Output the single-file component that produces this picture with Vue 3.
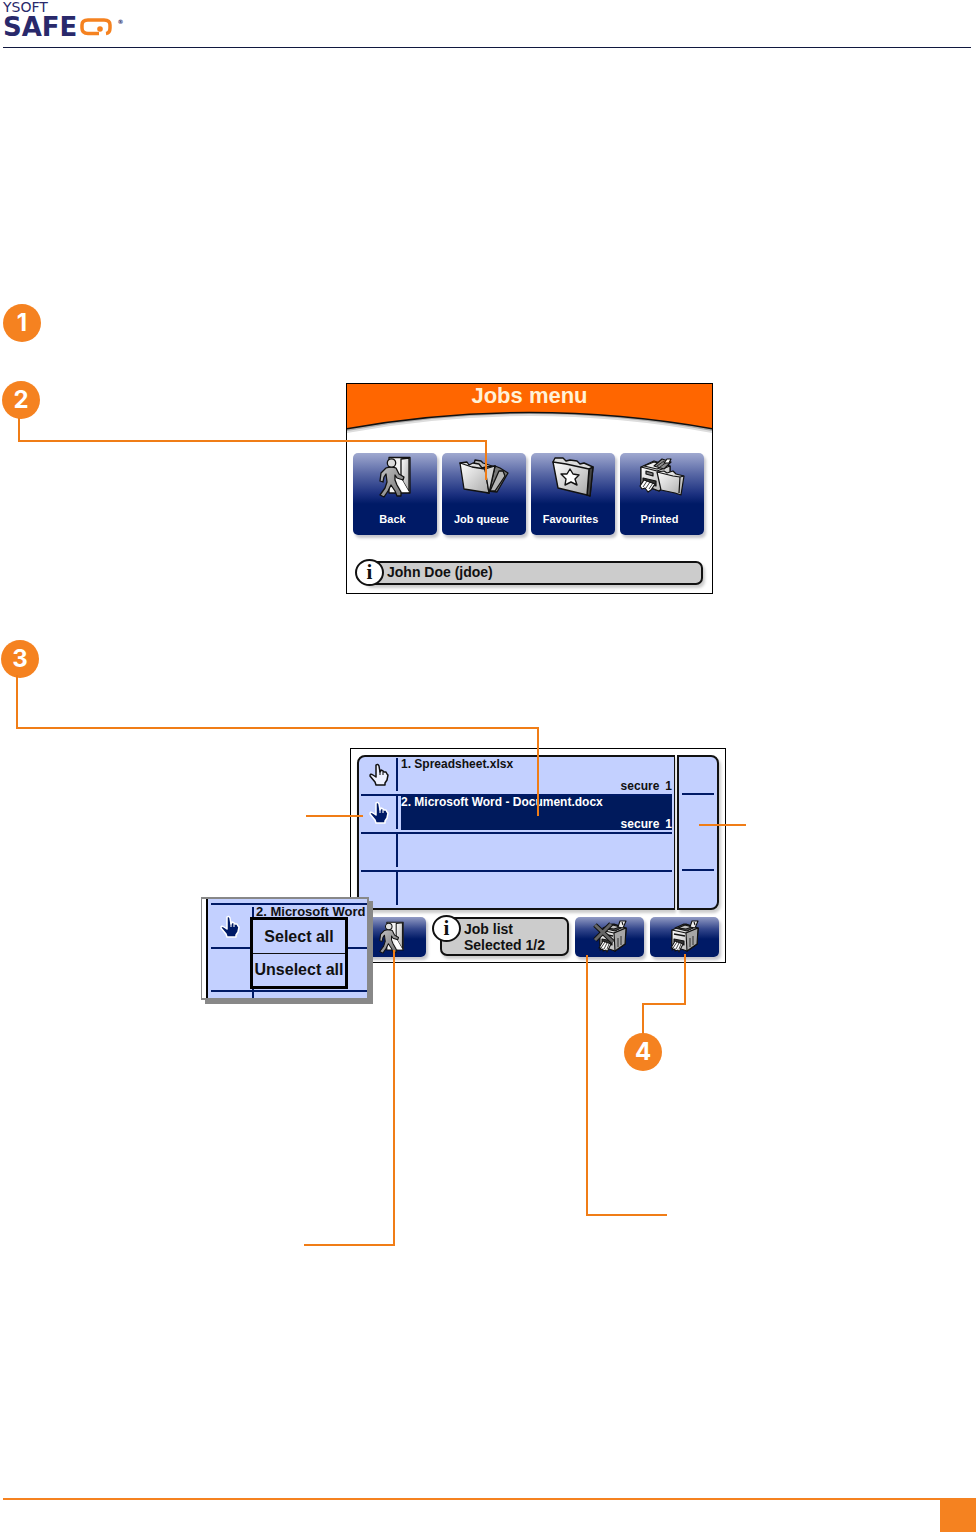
<script setup>
const menu = [
  { label: 'Back', icon: 'exit' },
  { label: 'Job queue', icon: 'folders' },
  { label: 'Favourites', icon: 'star' },
  { label: 'Printed', icon: 'printed' }
]
const jobs = [
  { name: '1. Spreadsheet.xlsx', mode: 'secure', copies: '1', selected: false },
  { name: '2. Microsoft Word - Document.docx', mode: 'secure', copies: '1', selected: true },
  null,
  null
]
const connectors = [
  '19,418 19,441 486,441 486,480',
  '17,675 17,728 538,728 538,816',
  '306,816 363,816',
  '699,825 746,825',
  '394,950 394,1245 304,1245',
  '587,955 587,1215 667,1215',
  '685,954 685,1004 643,1004 643,1035'
]
</script>

<template>
  <div class="page">
    <svg class="defs" aria-hidden="true">
      <defs>
        <linearGradient id="paper" x1="0" y1="0" x2="1" y2="1">
          <stop offset="0" stop-color="#fff" />
          <stop offset="1" stop-color="#a9a9a9" />
        </linearGradient>
        <linearGradient id="grey" x1="0" y1="0" x2="1" y2="1">
          <stop offset="0" stop-color="#c4c4c4" />
          <stop offset="1" stop-color="#6f6f6f" />
        </linearGradient>
        <symbol id="exit" viewBox="0 0 32 42">
          <g stroke="#111" stroke-width="1.3" stroke-linejoin="round">
            <path d="M10 1.5H31V37H10z" fill="#f4f4f4" />
            <path d="M22 3 30 2V36L22 22z" fill="url(#paper)" />
            <path d="M22 22 30 36H24L20 29z" fill="#fff" stroke="none" />
            <path d="M7 12Q12 10 17 12L20 18 25 21 24 24 18 22 16 19V24L18 29 22 36 22 40 18 40 16 35 12 29 9 35 5 41 1 39 6 32 8 26 7 18 5 21 4 26 1 25 2 17z" fill="url(#grey)" />
            <circle cx="12.5" cy="7" r="4.2" fill="#ddd" />
          </g>
        </symbol>
        <symbol id="folders" viewBox="0 0 50 36">
          <g stroke="#111" stroke-width="1.3" stroke-linejoin="round">
            <path d="M15 5 16 1 22 2 24 4 36 8 35 31 28 25z" fill="#bbb" />
            <path d="M29 32 36 7 41 9 49 14 38 33z" fill="#777" />
            <path d="M31 32 40 12 44 12 46 17 36 32z" fill="#b5b5b5" />
            <path d="M1 4 8 3 10 6 14 4 20 5 23 9 27 8 36 7 30 34 26 33z" fill="#ddd" />
            <path d="M1 4 5 30 30 34 26 10 13 8z" fill="url(#paper)" />
            <path d="M26 10 36 7 30 34z" fill="#d2d2d2" />
          </g>
        </symbol>
        <symbol id="star" viewBox="0 0 43 41">
          <g stroke="#111" stroke-width="1.4" stroke-linejoin="round">
            <path d="M1 5 3 1 11 1 14 4 18 3 25 4 28 7 32 6 41 10 38 39 32 35z" fill="#ddd" />
            <path d="M37 12 41 10 38 39 35 38z" fill="#444" />
            <path d="M1 5 6 31 35 38 37 12 14 7z" fill="url(#paper)" />
            <path d="M18 12 21 17 27 18 23 22 25 28 19 25 13 28 14 22 9 17 15 17z" fill="#fff" />
          </g>
        </symbol>
        <symbol id="printer" viewBox="0 0 30 34">
          <g stroke="#111" stroke-width="1.1" stroke-linejoin="round">
            <path d="M2 10 16 4 28 8 27 24 17 31 2 24z" fill="#ddd" />
            <path d="M2 10 16 13 28 8 27 24 17 31 2 26z" fill="url(#paper)" />
            <path d="M16 13 28 8 27 24 17 31z" fill="#a6a6a6" />
            <path d="M5 8 14 4 25 7 17 11z" fill="#555" />
            <path d="M8 8 15 5 22 7 16 9z" fill="#bdbdbd" />
            <path d="M20 7 22 1 28 1 25 8z" fill="#eee" />
            <path d="M24 2 25 5" fill="none" />
            <path d="M4 14 15 16" stroke-width="1.6" />
            <path d="M4 19 14 21V25L4 22z" fill="#333" />
            <path d="M5 21 1 28 3 28 2 30 5 29 5 31 8 30 9 32 13 24z" fill="#fff" />
            <path d="M7 22 3 28M9 23 6 29M11 24 9 29" stroke-width=".8" />
            <path d="M20 18V27M23 16V25" stroke-width=".8" />
          </g>
        </symbol>
        <symbol id="printed" viewBox="0 0 47 38">
          <g stroke="#111" stroke-width="1.2" stroke-linejoin="round">
            <path d="M2 9 15 3 31 8V24L20 33 2 27z" fill="#ddd" />
            <path d="M2 9 18 13 31 8V24L20 33 2 26z" fill="url(#paper)" />
            <path d="M5 8 15 4 28 7 18 11z" fill="#eee" />
            <path d="M15 8 23 1 32 4 25 11z" fill="#8c8c8c" />
            <path d="M18 8 25 3M21 9 28 4" stroke-width=".8" />
            <path d="M25 5 28 1 32 1 30 5z" fill="#fff" />
            <path d="M7 13 14 15V18L7 16z" fill="#777" />
            <path d="M4 20 17 23V28L4 25z" fill="#333" />
            <path d="M5 22 1 28 3 31 6 30 9 34 12 32 16 26z" fill="#fff" />
            <path d="M8 23 4 29M11 24 7 30M14 25 10 31" stroke-width=".8" />
            <path d="M18 14 25 13 28 15 34 13 37 16 45 18 42 37 36 35 22 32z" fill="url(#paper)" />
            <path d="M18 14 34 18 41 19 40 35M45 18 41 19" fill="none" />
          </g>
        </symbol>
        <symbol id="hand" viewBox="0 0 20 24">
          <path d="M7 2Q9 .5 10 3L11 9 12 7 14 8 15 9 17 9 18 11 19 12 18 17 16 20V22H7L6 19 1 13Q1 10 4 12L7 14z" stroke-width="1.5" stroke-linejoin="round" />
          <path d="M11 8V12M14 9V12" fill="none" stroke-width="1.1" />
        </symbol>
      </defs>
    </svg>

    <header class="masthead">
      <p class="brand-top">YSOFT</p>
      <p class="brand">
        <span>SAFE</span>
        <svg class="brand-mark" viewBox="0 0 36 20" role="img" aria-label="Q">
          <path d="M20 16.500H9Q3 16.500 3 11V8Q3 3 9 3H25Q31 3 31 8V11Q31 16 27 16.500" fill="none" stroke="#f58220" stroke-width="3.500" />
          <circle cx="21" cy="12" r="2.800" fill="#f58220" />
        </svg>
        <sup>®</sup>
      </p>
    </header>

    <main>
      <section class="step first"><span class="badge">1</span></section>

      <section class="step second">
        <span class="badge">2</span>
        <div class="screen menu-screen">
          <div class="banner">
            <svg viewBox="0 0 365 54" preserveAspectRatio="none" aria-hidden="true">
              <path d="M0 49Q182 15 365 49V0H0z" fill="#ddd" />
              <path d="M0 47Q182 13 365 47V0H0z" fill="#aaa" />
              <path d="M-2 45Q182 12 367 45V-2H-2z" fill="#ff6600" stroke="#111" stroke-width="1.500" />
            </svg>
            <h1>Jobs menu</h1>
          </div>
          <nav class="tiles">
            <button v-for="m in menu" :key="m.label" type="button" class="tile">
              <svg :class="['icon', m.icon]" aria-hidden="true"><use :href="'#' + m.icon" /></svg>
              <span class="label">{{ m.label }}</span>
            </button>
          </nav>
          <div class="user">
            <span class="info">i</span>
            <p>John Doe (jdoe)</p>
          </div>
        </div>
      </section>

      <section class="step third">
        <span class="badge">3</span>
        <div class="screen list-screen">
          <div class="panels">
            <ul class="jobs">
              <li v-for="(job, i) in jobs" :key="i">
                <div class="pick">
                  <button v-if="job" type="button" :aria-label="'Select ' + job.name">
                    <svg :class="['hand', { on: job.selected }]" aria-hidden="true"><use href="#hand" /></svg>
                  </button>
                </div>
                <div v-if="job" :class="['job', { selected: job.selected }]">
                  <span>{{ job.name }}</span>
                  <span class="meta"><span>{{ job.mode }}</span><span>{{ job.copies }}</span></span>
                </div>
              </li>
            </ul>
            <div class="scroller">
              <button type="button" aria-label="Scroll up"></button>
              <div></div>
              <button type="button" aria-label="Scroll down"></button>
            </div>
          </div>
          <div class="toolbar">
            <button type="button" class="tool" aria-label="Back">
              <svg class="icon tool-exit" aria-hidden="true"><use href="#exit" /></svg>
            </button>
            <div class="summary">
              <span class="info">i</span>
              <p>Job list<br />Selected 1/2</p>
            </div>
            <button type="button" class="tool" aria-label="Delete selected">
              <svg class="icon delete" viewBox="0 0 36 34" aria-hidden="true">
                <use href="#printer" x="6" y="0" width="30" height="34" />
                <path d="M3 5 21 22M19 4 3 20" stroke="#111" stroke-width="5" />
                <path d="M3 5 21 22M19 4 3 20" stroke="#666" stroke-width="3" />
              </svg>
            </button>
            <button type="button" class="tool" aria-label="Print selected">
              <svg class="icon print" aria-hidden="true"><use href="#printer" /></svg>
            </button>
          </div>
        </div>
      </section>
    </main>

    <aside class="popup">
      <div class="popup-view">
        <svg class="hand on" aria-hidden="true"><use href="#hand" /></svg>
        <span class="popup-job">2. Microsoft Word</span>
        <i class="rule r1"></i><i class="rule r2"></i><i class="rule r3"></i><i class="column"></i>
        <div class="choices">
          <button type="button">Select all</button>
          <button type="button">Unselect all</button>
        </div>
      </div>
    </aside>

    <svg class="connectors" viewBox="0 0 976 1300" aria-hidden="true">
      <polyline v-for="c in connectors" :key="c" :points="c" />
    </svg>
    <span class="badge fourth">4</span>

    <footer><span></span></footer>
  </div>
</template>

<style>
body { background: #fff; }
</style>

<style scoped>
* { box-sizing: border-box; }
p, h1, ul { margin: 0; padding: 0; }
button { font: inherit; color: inherit; border: 0; padding: 0; background: none; }
.page {
  position: relative;
  min-height: 100vh;
  display: flex;
  flex-direction: column;
  overflow: hidden;
  font-family: "Liberation Sans", Arial, sans-serif;
  font-weight: bold;
}
.defs { position: absolute; width: 0; height: 0; }
.masthead {
  height: 48px;
  margin: 0 5px 0 3px;
  border-bottom: 1px solid #10183f;
  color: #29296b;
  font-family: "DejaVu Sans", sans-serif;
}
.brand-top { font-size: 14px; line-height: 14px; font-weight: normal; }
.brand { display: flex; align-items: center; gap: 2px; height: 26px; font-size: 26px; line-height: 26px; }
.brand-mark { width: 36px; height: 20px; }
.brand sup { align-self: flex-start; font-size: 6px; line-height: 16px; }
main { flex: 1; padding-top: 256px; }
.step { display: grid; justify-items: start; align-items: start; }
.first { padding-left: 3px; }
.second { grid-template-columns: 344px auto; margin-top: 39px; padding-left: 2px; }
.third { grid-template-columns: 349px auto; margin-top: 46px; padding-left: 1px; }
.badge {
  display: grid;
  place-items: center;
  width: 38px;
  height: 38px;
  border-radius: 50%;
  background: #f58220;
  color: #fff;
  font: bold 24px/38px Inter, sans-serif;
}
.fourth { position: absolute; left: 624px; top: 1033px; }
.screen { border: 1px solid #000; background: #fff; color: #111; }
.menu-screen { width: 367px; height: 211px; margin-top: 2px; }
.banner { display: grid; }
.banner > * { grid-area: 1 / 1; }
.banner svg { width: 100%; height: 54px; }
h1 { color: #fff2d8; font-size: 22px; line-height: 24px; text-align: center; }
.tiles { display: grid; grid-template-columns: repeat(4, 84px); gap: 5px; padding: 15px 6px 0; }
.tile, .tool {
  border-radius: 5px;
  box-shadow: 2px 3px 3px #c5c5cb;
  background: linear-gradient(#a0a9d0, #5a69a6 25%, #1c3180 50%, #001a66 62%);
  color: #fff;
}
.tile {
  display: grid;
  grid-template-rows: 48px 36px;
  justify-items: center;
  align-items: center;
  align-content: start;
  height: 82px;
  font-size: 11px;
}
.label { padding-right: 5px; }
.icon { display: block; }
.exit { width: 32px; height: 42px; }
.folders { width: 50px; height: 36px; }
.star { width: 43px; height: 41px; }
.printed { width: 47px; height: 38px; }
.user {
  position: relative;
  height: 24px;
  margin: 26px 9px 0 16px;
  padding-left: 22px;
  border: 2px solid #111;
  border-radius: 7px;
  background: #ccc;
  box-shadow: 2px 3px 3px #ccc;
  font-size: 14px;
  line-height: 18px;
}
.info {
  position: absolute;
  left: -10px;
  top: -4px;
  width: 29px;
  height: 27px;
  border: 2px solid #111;
  border-radius: 50%;
  background: #fff;
  font: bold 21px/22px "Liberation Serif", serif;
  text-align: center;
}
.list-screen { width: 376px; height: 215px; margin-top: 108px; padding: 6px; }
.panels { display: flex; gap: 2px; height: 155px; }
.jobs {
  flex: 1;
  padding: 1px 2px 0;
  list-style: none;
  border: 2px solid #111;
  border-right-width: 1px;
  border-radius: 8px 0 0 8px;
  background: #c3d0ff;
  box-shadow: 1px 3px 3px #ccc;
  font-size: 12px;
}
.jobs li { display: grid; grid-template-columns: 37px 1fr; gap: 3px; height: 38px; padding-bottom: 2px; border-bottom: 2px solid #001a66; }
.jobs li:last-child { border: 0; }
.pick { display: grid; place-items: center; height: 33px; border-right: 2px solid #001a66; }
.hand { display: block; width: 20px; height: 24px; fill: #eef1ff; stroke: #111; }
.hand.on { fill: #001a66; stroke: #fff; }
.job { display: flex; flex-direction: column; justify-content: space-between; height: 34px; line-height: 12px; }
.selected { background: #001a5c; color: #fff; }
.meta { display: flex; justify-content: flex-end; gap: 6px; }
.scroller {
  display: grid;
  grid-template-rows: 38px 76px 1fr;
  width: 42px;
  padding: 0 3px;
  border: 2px solid #111;
  border-radius: 0 8px 8px 0;
  background: #c3d0ff;
  box-shadow: 2px 3px 3px #ccc;
}
.scroller > * { border-bottom: 2px solid #001a66; }
.scroller > :last-child { border: 0; }
.toolbar { display: grid; grid-template-columns: 77px 129px 69px 69px; justify-content: space-between; gap: 6px; margin-top: 7px; }
.tool { display: grid; place-items: center; height: 40px; background: linear-gradient(#929bc4, #34478c 30%, #001a66 55%); }
.toolbar .tool:first-child { margin-right: 8px; }
.tool-exit { width: 25px; height: 33px; }
.delete { width: 36px; height: 34px; }
.print { width: 30px; height: 34px; }
.summary {
  position: relative;
  height: 39px;
  padding: 2px 0 0 22px;
  border: 2px solid #111;
  border-radius: 7px;
  background: #ccc;
  box-shadow: 2px 3px 3px #ccc;
  font-size: 14px;
  line-height: 16px;
}
.popup {
  position: absolute;
  left: 201px;
  top: 897px;
  width: 168px;
  height: 103px;
  padding-left: 4px;
  border: 2px solid #888;
  border-left-width: 1px;
  background: #fff;
  box-shadow: 4px 4px 0 #888;
}
.popup-view { position: relative; height: 100%; overflow: hidden; border-left: 2px solid #000; background: #c3d0ff; color: #111; }
.popup-view > * { position: absolute; }
.popup-view .hand { left: 12px; top: 16px; }
.popup-job { left: 48px; top: 5px; font-size: 13px; line-height: 16px; white-space: nowrap; }
.rule { left: 3px; right: 0; height: 2px; background: #001a66; }
.r1 { top: 4px; }
.r2 { top: 48px; }
.r3 { top: 91px; }
.column { left: 44px; top: 8px; width: 2px; height: 100%; background: #001a66; }
.choices { left: 42px; top: 18px; width: 98px; height: 72px; display: grid; grid-template-rows: 1fr 1fr; border: 3px solid #000; background: #c3d0ff; font-size: 16px; }
.choices button { white-space: nowrap; }
.choices button + button { border-top: 1px solid #111; }
.connectors { position: absolute; left: 0; top: 0; width: 976px; height: 1300px; pointer-events: none; fill: none; stroke: #f07d17; stroke-width: 2; }
footer { display: flex; justify-content: flex-end; height: 34px; margin-left: 3px; border-top: 2px solid #f58220; }
footer span { width: 36px; background: #f58220; }
</style>
